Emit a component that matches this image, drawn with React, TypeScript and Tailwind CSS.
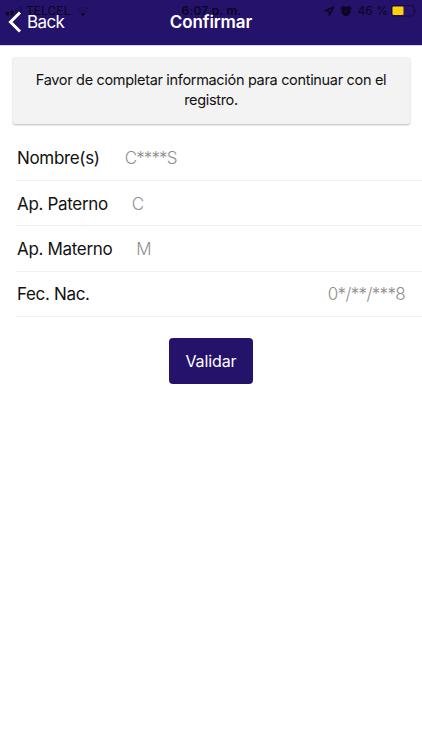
import React from 'react';

interface Field {
  label: string;
  value: string;
  rowClass: string;
  valueClass: string;
}

const FIELDS: Field[] = [
  { label: 'Nombre(s)', value: 'C****S', rowClass: 'gap-[25px]', valueClass: 'tracking-[-0.9px]' },
  { label: 'Ap. Paterno', value: 'C', rowClass: 'gap-6', valueClass: '' },
  { label: 'Ap. Materno', value: 'M', rowClass: 'gap-6', valueClass: '' },
  { label: 'Fec. Nac.', value: '0*/**/***8', rowClass: 'justify-between', valueClass: 'tracking-[-0.65px]' },
];

// Translucent system bar, drawn over the app header
const StatusBar: React.FC = () => (
  <div className="absolute inset-x-0 top-0 grid h-[22px] grid-cols-3 items-center pl-[6px] pr-[5px] text-[12px] leading-[22px] text-[#0b0422]">
    <div className="flex items-center">
      <svg width="17" height="10" viewBox="0 0 17 10" fill="currentColor">
        <rect x="0" y="6" width="3" height="3.5" rx="0.8" />
        <rect x="4.5" y="4.5" width="3" height="5" rx="0.8" />
        <rect x="9" y="2.5" width="3" height="7" rx="0.8" opacity="0.3" />
        <rect x="13.3" y="0" width="3" height="9.5" rx="0.8" opacity="0.3" />
      </svg>
      <span className="ml-[3px] tracking-[0.05px]">TELCEL</span>
      <svg className="ml-[6px]" width="14" height="11" viewBox="0 0 14 11" fill="none" stroke="currentColor" strokeWidth="1.5">
        <path d="M1 4a8.6 8.6 0 0 1 12 0" opacity="0.3" />
        <path d="M3.2 6.4a5.5 5.5 0 0 1 7.6 0" opacity="0.3" />
        <path d="M4.7 8a3.4 3.4 0 0 1 4.6 0L7 10.3z" fill="currentColor" stroke="none" />
      </svg>
    </div>
    <span className="whitespace-nowrap text-center font-semibold tracking-[0.2px]">6:07 p. m.</span>
    <div className="flex items-center justify-end">
      <svg width="11" height="10" viewBox="0 0 11 10" fill="none" stroke="currentColor" strokeWidth="1.4" strokeLinejoin="round">
        <path d="M9.6.8 1 4.8l4.2.3.3 4.2z" />
      </svg>
      <svg className="ml-[5px]" width="12" height="12" viewBox="0 0 12 12" fill="none">
        <path d="M1 3.2 3.2 1.3M11 3.2 8.8 1.3" stroke="currentColor" strokeWidth="1.4" strokeLinecap="round" />
        <circle cx="6" cy="6.3" r="4.7" fill="currentColor" />
        <path d="M6.2 3.8v2.6H4.4" stroke="#25136b" strokeWidth="0.7" />
      </svg>
      <span className="ml-[5px] whitespace-nowrap tracking-[0.05px]">46 %</span>
      <svg className="ml-[3px]" width="26" height="12" viewBox="0 0 26 12">
        <rect x="0.5" y="0.5" width="22.5" height="10.5" rx="2.5" fill="none" stroke="currentColor" opacity="0.6" />
        <rect x="1.5" y="1.5" width="11" height="8.5" rx="1" fill="#ffcf0a" />
        <path d="M24.2 4v3.5c1.4-.5 1.4-3 0-3.500" fill="currentColor" opacity="0.6" />
      </svg>
    </div>
  </div>
);

const FieldRow: React.FC<{ field: Field }> = ({ field }) => (
  <div className={`ml-4 flex h-[45.2px] items-center border-b border-[#f0f0f0] pl-px pr-[17px] pt-[2px] text-[17px] ${field.rowClass}`}>
    <span className="tracking-[-0.33px] text-[#111]">{field.label}</span>
    <span className={`font-light text-[#8f8f8f] ${field.valueClass}`}>{field.value}</span>
  </div>
);

export default function App() {
  return (
    <div className="h-[750px] w-full overflow-hidden bg-white font-['Inter',sans-serif]">
      {/* Header */}
      <header className="relative h-[46px] border-b border-[#d8d0fc] bg-[#25136b]">
        <StatusBar />
        <div className="relative grid h-[45px] grid-cols-3 items-center text-white">
          <button className="flex items-center pl-2">
            <svg className="mb-px" width="14" height="22" viewBox="0 0 14 22" fill="none" stroke="white" strokeWidth="3">
              <path d="M12 1.5 2.5 11l9.5 9.5" />
            </svg>
            <span className="ml-[5px] pt-px text-[17px] tracking-[-0.6px]">Back</span>
          </button>
          <h1 className="pt-px text-center text-[17px] font-semibold tracking-[-0.1px]">Confirmar</h1>
        </div>
      </header>

      {/* Notice */}
      <div className="mx-[12.5px] mt-[11px] h-[67px] rounded-[2px] bg-[#f3f3f3] px-4 pt-[13px] text-center text-[14.5px] leading-[20px] tracking-[-0.32px] text-[#111] shadow-[0_1px_2px_rgba(0,0,0,0.28)]">
        Favor de completar información para continuar con el registro.
      </div>

      {/* Form */}
      <div className="mt-[12px]">
        {FIELDS.map((field) => (
          <FieldRow key={field.label} field={field} />
        ))}
      </div>

      <button className="mx-auto mt-[21px] block h-[46px] w-[84px] rounded-[4px] bg-[#25136b] text-[16px] tracking-[-0.1px] text-white">
        Validar
      </button>
    </div>
  );
}
